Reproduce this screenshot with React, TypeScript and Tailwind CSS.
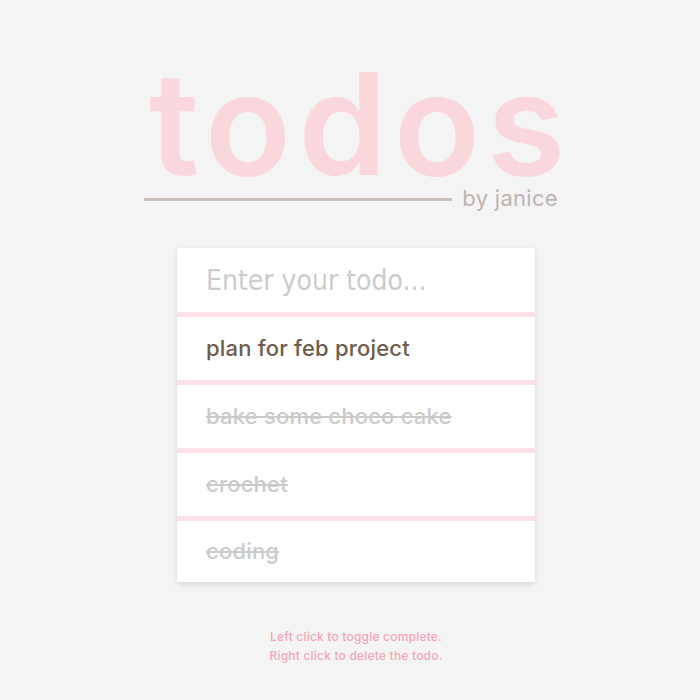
export default function App() {
  const todos = [
    { text: "plan for feb project", done: false },
    { text: "bake some choco cake", done: true },
    { text: "crochet", done: true },
    { text: "coding", done: true },
  ];

  return (
    <div className="min-h-[700px] w-full bg-[#f4f4f4] pl-[12px] flex flex-col items-center font-['Inter',sans-serif]">
      {/* Header */}
      <div className="mt-[73px] w-[414px] flex flex-col">
        <h1 className="text-[142px] leading-[100px] font-semibold text-[#f9d7dd] tracking-[7px] text-center">
          todos
        </h1>
        <div className="flex items-center gap-[10px] mt-[13px] -ml-[5px] mr-[5px]">
          <div className="flex-1 h-[3px] bg-[#c9c0bc]" />
          <span className="text-[22px] leading-[24px] text-[#bdb4b0] tracking-[0.3px] pb-[2px]">by janice</span>
        </div>
      </div>

      {/* Todo card */}
      <div className="mt-[36px] w-[358px] bg-white shadow-[0_2px_6px_rgba(0,0,0,0.12)] flex flex-col">
        <input
          className="h-[64px] px-[29px] text-[28px] font-['DejaVu_Sans_Condensed','DejaVu_Sans',sans-serif] text-[#555] placeholder:text-[#cccccc] outline-none bg-transparent"
          placeholder="Enter your todo..."
        />
        {todos.map((t) => (
          <div
            key={t.text}
            className="h-[68px] last:h-[66px] border-t-[5px] border-[#fde1e6] flex items-center px-[29px]"
          >
            <span
              className={
                t.done
                  ? "text-[22px] font-medium tracking-[0.2px] text-[#cbcbcb] line-through"
                  : "text-[22px] font-medium tracking-[0.2px] text-[#6e5c4c]"
              }
            >
              {t.text}
            </span>
          </div>
        ))}
      </div>

      {/* Footer hint */}
      <div className="mt-[45px] flex flex-col items-center text-[12px] leading-[19px] font-medium tracking-[0.2px] text-[#f5a5b8]">
        <p>Left click to toggle complete.</p>
        <p>Right click to delete the todo.</p>
      </div>
    </div>
  );
}
